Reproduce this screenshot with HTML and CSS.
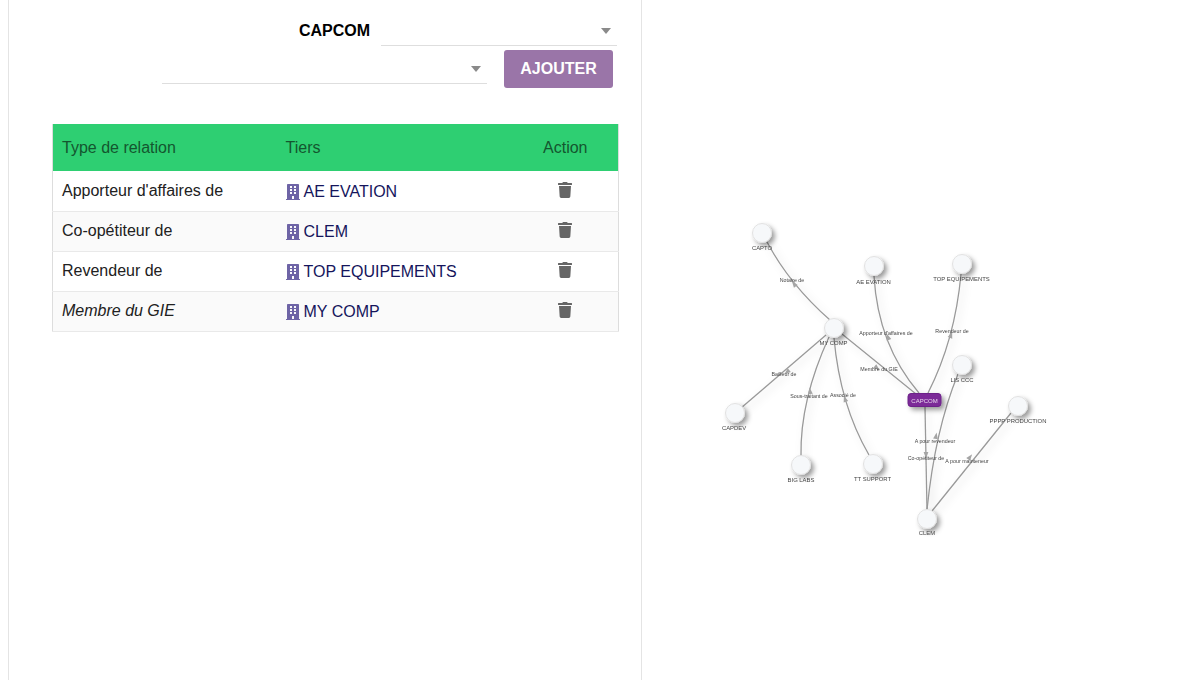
FILE: index.html
```html
<!DOCTYPE html>
<html lang="fr">
<head>
    <meta charset="UTF-8">
    <title>Relations</title>
    <link rel="stylesheet" href="styles.css">
</head>
<body>
    <svg class="icon-defs" width="0" height="0">
        <symbol id="ic-building" viewBox="0 0 448 512">
            <path d="M436 480h-20V24c0-13.255-10.745-24-24-24H56C42.745 0 32 10.745 32 24v456H12c-6.627 0-12 5.373-12 12v20h448v-20c0-6.627-5.373-12-12-12zM128 76c0-6.627 5.373-12 12-12h40c6.627 0 12 5.373 12 12v40c0 6.627-5.373 12-12 12h-40c-6.627 0-12-5.373-12-12V76zm0 96c0-6.627 5.373-12 12-12h40c6.627 0 12 5.373 12 12v40c0 6.627-5.373 12-12 12h-40c-6.627 0-12-5.373-12-12v-40zm52 148h-40c-6.627 0-12-5.373-12-12v-40c0-6.627 5.373-12 12-12h40c6.627 0 12 5.373 12 12v40c0 6.627-5.373 12-12 12zm76 160h-64v-84c0-6.627 5.373-12 12-12h40c6.627 0 12 5.373 12 12v84zm64-172c0 6.627-5.373 12-12 12h-40c-6.627 0-12-5.373-12-12v-40c0-6.627 5.373-12 12-12h40c6.627 0 12 5.373 12 12v40zm0-96c0 6.627-5.373 12-12 12h-40c-6.627 0-12-5.373-12-12v-40c0-6.627 5.373-12 12-12h40c6.627 0 12 5.373 12 12v40zm0-96c0 6.627-5.373 12-12 12h-40c-6.627 0-12-5.373-12-12V76c0-6.627 5.373-12 12-12h40c6.627 0 12 5.373 12 12v40z"/>
        </symbol>
        <symbol id="ic-trash" viewBox="0 0 448 512">
            <path d="M432 32H312l-9.4-18.7A24 24 0 0 0 281.1 0H166.8a23.72 23.72 0 0 0-21.4 13.3L136 32H16A16 16 0 0 0 0 48v32a16 16 0 0 0 16 16h416a16 16 0 0 0 16-16V48a16 16 0 0 0-16-16zM53.2 467a48 48 0 0 0 47.9 45h245.8a48 48 0 0 0 47.9-45L416 128H32z"/>
        </symbol>
    </svg>

    <div class="page">
        <div class="panel">
            <div class="form-row">
                <span class="company">CAPCOM</span>
                <div class="select select-type"><span class="caret"></span></div>
            </div>
            <div class="form-row form-row-add">
                <div class="select select-tiers"><span class="caret"></span></div>
                <button class="btn-add">AJOUTER</button>
            </div>

            <table class="relations">
                <thead>
                    <tr>
                        <th class="col-type">Type de relation</th>
                        <th class="col-tiers">Tiers</th>
                        <th class="col-action">Action</th>
                    </tr>
                </thead>
                <tbody>
                    <tr>
                        <td>Apporteur d'affaires de</td>
                        <td><a class="tiers" href="#"><svg class="ic-building"><use href="#ic-building"/></svg>AE EVATION</a></td>
                        <td class="col-action"><svg class="ic-trash"><use href="#ic-trash"/></svg></td>
                    </tr>
                    <tr>
                        <td>Co-opétiteur de</td>
                        <td><a class="tiers" href="#"><svg class="ic-building"><use href="#ic-building"/></svg>CLEM</a></td>
                        <td class="col-action"><svg class="ic-trash"><use href="#ic-trash"/></svg></td>
                    </tr>
                    <tr>
                        <td>Revendeur de</td>
                        <td><a class="tiers" href="#"><svg class="ic-building"><use href="#ic-building"/></svg>TOP EQUIPEMENTS</a></td>
                        <td class="col-action"><svg class="ic-trash"><use href="#ic-trash"/></svg></td>
                    </tr>
                    <tr>
                        <td class="inherited">Membre du GIE</td>
                        <td><a class="tiers" href="#"><svg class="ic-building"><use href="#ic-building"/></svg>MY COMP</a></td>
                        <td class="col-action"><svg class="ic-trash"><use href="#ic-trash"/></svg></td>
                    </tr>
                </tbody>
            </table>
        </div>

        <div class="graph">
            <svg class="graph-svg" width="558" height="680" viewBox="642 0 558 680">
                <defs>
                    <filter id="edge-shadow" x="-30%" y="-30%" width="170%" height="170%">
                        <feDropShadow dx="3" dy="3" stdDeviation="4" flood-color="#000" flood-opacity="0.16"/>
                    </filter>
                    <filter id="node-shadow" x="-60%" y="-60%" width="240%" height="240%">
                        <feDropShadow dx="3" dy="3" stdDeviation="2.5" flood-color="#000" flood-opacity="0.4"/>
                    </filter>
                    <path id="arrow" d="M0 -3.5 L2.4 3 L-2.4 3z"/>
                </defs>

                <g class="edges" filter="url(#edge-shadow)">
                    <path d="M767 242 Q790 285 830 320"/>
                    <path d="M874 276 Q878 345 919 393"/>
                    <path d="M961 274 Q955 340 928 393"/>
                    <path d="M842 334 L916 394"/>
                    <path d="M826 335 L741 408"/>
                    <path d="M829 337 Q800 400 801 456"/>
                    <path d="M834 338 Q840 405 869 455"/>
                    <path d="M925 407 L927 510"/>
                    <path d="M958 374 Q935 430 927 510"/>
                    <path d="M1011 413 L932 511"/>
                </g>
                <g class="arrows">
                    <use href="#arrow" transform="translate(794 284) rotate(-38)"/>
                    <use href="#arrow" transform="translate(888 337) rotate(-20)"/>
                    <use href="#arrow" transform="translate(951 335) rotate(20)"/>
                    <use href="#arrow" transform="translate(877 368) rotate(130)"/>
                    <use href="#arrow" transform="translate(787 372) rotate(-130)"/>
                    <use href="#arrow" transform="translate(810 391) rotate(-8)"/>
                    <use href="#arrow" transform="translate(845 399) rotate(-18)"/>
                    <use href="#arrow" transform="translate(936 436) rotate(10)"/>
                    <use href="#arrow" transform="translate(926 455) rotate(180)"/>
                    <use href="#arrow" transform="translate(970 457) rotate(38)"/>
                </g>

                <g class="edge-labels">
                    <text x="792" y="282">Notaire de</text>
                    <text x="886" y="335">Apporteur d'affaires de</text>
                    <text x="952" y="333">Revendeur de</text>
                    <text x="879" y="371">Membre du GIE</text>
                    <text x="784" y="376">Bailleur de</text>
                    <text x="809" y="398">Sous-traitant de</text>
                    <text x="843" y="397">Associé de</text>
                    <text x="935" y="443">A pour revendeur</text>
                    <text x="926" y="460">Co-opétiteur de</text>
                    <text x="967" y="463">A pour mainteneur</text>
                </g>

                <g class="nodes" filter="url(#node-shadow)">
                    <circle cx="762" cy="233" r="9.5"/>
                    <circle cx="874" cy="266" r="9.5"/>
                    <circle cx="962" cy="264" r="9.5"/>
                    <circle cx="834" cy="328" r="9.5"/>
                    <circle cx="962" cy="365" r="9.5"/>
                    <circle cx="1018" cy="406" r="9.5"/>
                    <circle cx="735" cy="413" r="9.5"/>
                    <circle cx="801" cy="465" r="9.5"/>
                    <circle cx="873" cy="464" r="9.5"/>
                    <circle cx="927" cy="519" r="9.5"/>
                </g>
                <rect class="node-main" x="908" y="393.5" width="33" height="13" rx="3" filter="url(#node-shadow)"/>
                <text class="node-main-label" x="924.5" y="402.5">CAPCOM</text>

                <g class="node-labels">
                    <text x="762" y="250">CAPTO</text>
                    <text x="873.5" y="283.5">AE EVATION</text>
                    <text x="961.5" y="280.5">TOP EQUIPEMENTS</text>
                    <text x="833.5" y="345">MY COMP</text>
                    <text x="962" y="382">LIS CCC</text>
                    <text x="1018" y="423">PPPP PRODUCTION</text>
                    <text x="734" y="430">CAPDEV</text>
                    <text x="801" y="482">BIG LABS</text>
                    <text x="872.5" y="481">TT SUPPORT</text>
                    <text x="927" y="535">CLEM</text>
                </g>
            </svg>
        </div>
    </div>
</body>
</html>
```

FILE: styles.css
```css
html, body {
    margin: 0;
    height: 100%;
    background-color: #fff;
    overflow: hidden;
}
body {
    font-family: "Liberation Sans", Arial, sans-serif;
    font-size: 16px;
    color: #212121;
}
.icon-defs {
    display: block;
    height: 0;
}
.page {
    display: flex;
    height: 680px;
}

/* Colonne gauche */
.panel {
    box-sizing: border-box;
    width: 634px;
    margin-left: 8px;
    padding: 16px 23px 0 43px;
    border-left: 1px solid #e4e4e4;
    border-right: 1px solid #e4e4e4;
}
.form-row {
    display: flex;
    justify-content: flex-end;
    align-items: center;
}
.company {
    margin-right: 11px;
    font-weight: 700;
    color: #000;
}
.select {
    position: relative;
    box-sizing: border-box;
    height: 30px;
    border-bottom: 1px solid #dedede;
}
.select-type {
    width: 236px;
    margin-right: 1px;
}
.select-tiers {
    width: 325px;
    margin-right: 17px;
}
.caret {
    position: absolute;
    top: 12px;
    right: 6px;
    border-left: 5px solid transparent;
    border-right: 5px solid transparent;
    border-top: 6px solid #8a8a8a;
}
.form-row-add {
    margin-top: 4px;
    padding-right: 5px;
}
.btn-add {
    box-sizing: border-box;
    width: 109px;
    height: 38px;
    padding: 0;
    border: 0;
    border-radius: 3px;
    background-color: #9a75a8;
    color: #fff;
    font-family: inherit;
    font-size: 16px;
    font-weight: 700;
}

/* Tableau */
.relations {
    width: 567px;
    margin-top: 36px;
    border-collapse: collapse;
    table-layout: fixed;
    border: 1px solid #dddddd;
    border-top: 0;
}
.relations th {
    box-sizing: border-box;
    height: 47px;
    padding: 0 9px;
    background-color: #2ecf72;
    color: #14562f;
    font-weight: 400;
    text-align: left;
}
.relations td {
    box-sizing: border-box;
    height: 40px;
    padding: 0 9px;
    border-bottom: 1px solid #e9e9e9;
}
.relations tbody tr:nth-child(even) {
    background-color: #fafafa;
}
.col-type {
    width: 224px;
}
.col-tiers {
    width: 236px;
}
.relations .col-action {
    text-align: center;
}
.inherited {
    font-style: italic;
}
.tiers {
    display: flex;
    align-items: center;
    padding-top: 2px;
    color: #15155c;
    text-decoration: none;
}
.ic-building {
    width: 14px;
    height: 16px;
    margin-right: 4px;
    fill: #6e64a6;
}
.ic-trash {
    display: block;
    width: 14px;
    height: 16px;
    margin: -2px auto 0;
    fill: #666;
}

/* Graphe */
.graph {
    flex: 1;
}
.graph-svg {
    display: block;
    filter: blur(0.3px);
}
.edges path {
    fill: none;
    stroke: #999;
    stroke-width: 1.3;
}
.arrows use {
    fill: #a5a5a5;
}
.nodes circle {
    fill: #f6f8fa;
    stroke: #e2e2e2;
    stroke-width: 1;
}
.node-main {
    fill: #7b2a98;
    stroke: #6c2088;
}
.node-main-label {
    fill: #e9d8ef;
    font-family: "Liberation Sans", sans-serif;
    font-size: 6px;
    text-anchor: middle;
}
.node-labels text, .edge-labels text {
    font-family: "Liberation Sans", sans-serif;
    text-anchor: middle;
}
.node-labels text {
    fill: #444;
    font-size: 5.9px;
}
.edge-labels text {
    fill: #444;
    font-size: 5.3px;
}
```
